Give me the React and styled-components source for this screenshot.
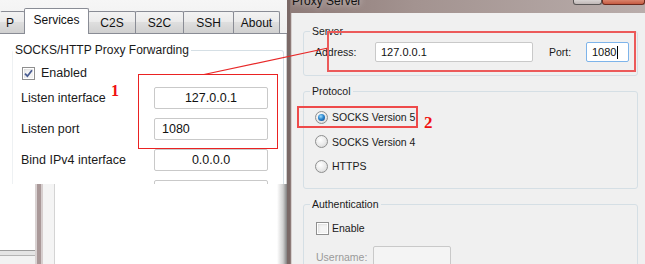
import React from "react";
import styled, { createGlobalStyle } from "styled-components";

const Global = createGlobalStyle`
  html, body { margin: 0; padding: 0; background: #fff; }
  body {
    width: 645px; height: 264px; overflow: hidden;
    font-family: "Liberation Sans", Arial, sans-serif;
    font-size: 12px; color: #1a1a1a;
  }
`;

const Stage = styled.div`
  position: relative;
  width: 645px;
  height: 264px;
  display: flex;
  overflow: hidden;
`;

/* ---------- left dialog ---------- */
const LeftPane = styled.div`
  width: 287px;
  flex: none;
  display: flex;
  flex-direction: column;
`;

const DialogTop = styled.div`
  height: 184px;
  flex: none;
  display: flex;
  flex-direction: column;
  overflow: hidden;
  background: #fff;
`;

const TabBar = styled.div`
  box-sizing: border-box;
  height: 34px;
  flex: none;
  display: flex;
  align-items: flex-end;
  background: linear-gradient(#f6f6f6, #efefef);
  border-bottom: 1px solid #898c95;
`;

const Tab = styled.div`
  box-sizing: border-box;
  width: ${(p) => p.$w}px;
  height: ${(p) => (p.$active ? 26 : 22)}px;
  margin-left: ${(p) => (p.$first ? 0 : -1)}px;
  margin-bottom: ${(p) => (p.$active ? -1 : 0)}px;
  border: 1px solid #898c95;
  border-bottom: none;
  border-left-color: ${(p) => (p.$first ? "transparent" : "#898c95")};
  border-radius: 2px 2px 0 0;
  background: ${(p) =>
    p.$active
      ? "#fff"
      : "linear-gradient(#f3f3f3 0%, #ebebeb 45%, #dedede 50%, #d0d0d0 100%)"};
  position: relative;
  z-index: ${(p) => (p.$active ? 2 : 1)};
  display: flex;
  align-items: center;
  justify-content: ${(p) => (p.$first ? "flex-end" : "center")};
  padding: ${(p) => (p.$first ? "0 10px 0 0" : p.$active ? "0 0 3px 0" : "0")};
  font-size: 12px;
  color: #111;
`;

const TabPage = styled.div`
  flex: 1;
  background: #fff;
  border-right: 1px solid #cfcfcf;
  padding: 9px 2px 0 12px;
`;

const GroupBox = styled.fieldset`
  margin: ${(p) => p.$mt || 0}px 0 0 0;
  padding: 0;
  min-width: 0;
  border: 1px solid #d5dfe5;
  border-left-color: ${(p) => (p.$faintLeft ? "#eef1f3" : "#d5dfe5")};
  border-radius: 3px;
`;

const Legend = styled.legend`
  margin-left: ${(p) => p.$ml || 0}px;
  padding: 0 2px;
  font-size: ${(p) => p.$fs || 12}px;
  line-height: ${(p) => p.$lh || 14}px;
  color: #1a1a1a;
`;

const LeftBody = styled.div`
  padding: 8px 0 0 8px;
`;

const CheckRow = styled.label`
  display: flex;
  align-items: center;
  gap: ${(p) => p.$gap || 6}px;
  height: 16px;
  margin-left: ${(p) => p.$ml || 0}px;
  font-size: ${(p) => p.$fs || 12.5}px;
`;

const CheckBox = styled.span`
  box-sizing: border-box;
  width: 13px;
  height: 13px;
  flex: none;
  border: 1px solid #8f8f8f;
  background: #f4f4f4;
  box-shadow: inset 0 0 0 1px #fff, inset 1px 1px 3px #c9c9c9;
  display: flex;
  align-items: center;
  justify-content: center;
`;

const FieldGrid = styled.div`
  display: grid;
  grid-template-columns: 133px 114px;
  row-gap: 9px;
  align-items: center;
  margin-top: 6px;
`;

const FieldLabel = styled.span`
  font-size: 12.5px;
  white-space: nowrap;
`;

const TextBox = styled.div`
  box-sizing: border-box;
  height: ${(p) => p.$h || 22}px;
  width: ${(p) => (p.$w ? `${p.$w}px` : "auto")};
  border: 1px solid ${(p) => (p.$focus ? "#7eb4ea" : "#c9c9c9")};
  border-radius: 2px;
  background: ${(p) => (p.$disabled ? "#f4f4f4" : "#fff")};
  display: flex;
  align-items: center;
  justify-content: ${(p) => (p.$center ? "center" : "flex-start")};
  padding: 0 ${(p) => (p.$pad == null ? 7 : p.$pad)}px;
  margin-left: ${(p) => p.$ml || 0}px;
  font-size: ${(p) => p.$fs || 12.5}px;
  color: #111;
  white-space: nowrap;
  flex: none;
`;

const Caret = styled.span`
  display: inline-block;
  width: 1px;
  height: 13px;
  background: #000;
  margin-left: 1px;
`;

const DialogBottom = styled.div`
  flex: 1;
  display: flex;
`;

const BackLeft = styled.div`
  width: 35px;
  flex: none;
  display: flex;
  flex-direction: column;
  background: #fff;
`;

const Ledge = styled.div`
  margin-top: auto;
  height: 4px;
  border-top: 1px solid #9c9c9c;
  border-bottom: 1px solid #b4b4b4;
  background: #e4e4e4;
`;

const Floor = styled.div`
  height: 8px;
  background: #f2f2f2;
`;

const FrameBand = styled.div`
  width: 20px;
  flex: none;
  background: linear-gradient(
    90deg,
    #d9d2d2 0 2px,
    #a99898 2px 6px,
    #d6cece 6px 8px,
    #f4f4f4 8px 19px,
    #d4d4d4 19px 20px
  );
`;

const BackRight = styled.div`
  flex: 1;
  background: linear-gradient(
    90deg,
    #fff 0,
    #fff calc(100% - 10px),
    #d0d0d0 calc(100% - 4px),
    #808080 100%
  );
`;

/* ---------- right window ---------- */
const Window = styled.div`
  width: 358px;
  flex: none;
  display: flex;
  flex-direction: column;
  box-sizing: border-box;
  border-left: 3px solid #7a6967;
  padding-left: 1px;
  background: linear-gradient(90deg, #8e7b78 0%, #a39390 35%, #b9adab 100%);
`;

const TitleBar = styled.div`
  height: 13px;
  flex: none;
  display: flex;
  align-items: flex-start;
  overflow: hidden;
`;

const Title = styled.span`
  flex: 1;
  margin: -6px 0 0 1px;
  font-size: 12px;
  line-height: 14px;
  color: #111;
  text-shadow: 0 0 6px rgba(255, 255, 255, 0.8);
`;

const CaptionButton = styled.span`
  box-sizing: border-box;
  width: ${(p) => p.$w}px;
  height: 5px;
  border: 1px solid ${(p) => (p.$close ? "#6b2a1e" : "#5a5656")};
  border-top: none;
  border-radius: 0 0 3px 3px;
  background: ${(p) =>
    p.$close ? "linear-gradient(#d9836b, #c55b42)" : "linear-gradient(#d8d3d2, #bfb7b6)"};
`;

const Client = styled.div`
  flex: 1;
  background: #f0f0f0;
  border-left: 1px solid #d6d0cf;
  padding: 12px 7px 0 11px;
  overflow: hidden;
  font-size: 10.5px;
`;

const RightBody = styled.div`
  padding: ${(p) => p.$pad};
  display: flex;
  flex-direction: column;
  gap: ${(p) => p.$gap || 0}px;
`;

const ServerRow = styled.div`
  display: flex;
  align-items: center;
  height: ${(p) => p.$h || 20}px;
`;

const RLabel = styled.span`
  width: ${(p) => p.$w}px;
  flex: none;
  margin-left: ${(p) => p.$ml || 0}px;
  font-size: 10.5px;
  color: ${(p) => (p.$disabled ? "#9a9a9a" : "#1a1a1a")};
  white-space: nowrap;
`;

const RadioRow = styled.label`
  display: flex;
  align-items: center;
  gap: 4px;
  height: 16px;
  font-size: 10.5px;
`;

const Radio = styled.span`
  box-sizing: border-box;
  width: 13px;
  height: 13px;
  flex: none;
  border-radius: 50%;
  border: 1px solid #8e8f8f;
  background: radial-gradient(circle at 40% 35%, #ffffff 0%, #e9e9e9 55%, #cfcfcf 100%);
  display: flex;
  align-items: center;
  justify-content: center;
`;

const RadioDot = styled.span`
  width: 7px;
  height: 7px;
  border-radius: 50%;
  background: radial-gradient(circle at 40% 35%, #9fdcfb 0%, #2b86cf 45%, #0d3f7d 100%);
`;

/* ---------- annotations ---------- */
const Overlay = styled.div`
  position: absolute;
  inset: 0;
  pointer-events: none;
  z-index: 10;
`;

const RedBox = styled.div`
  position: absolute;
  left: ${(p) => p.$x}px;
  top: ${(p) => p.$y}px;
  width: ${(p) => p.$w}px;
  height: ${(p) => p.$h}px;
  box-sizing: border-box;
  border: ${(p) => p.$bw || 1}px solid ${(p) => p.$c || "#e82020"};
`;

const Marker = styled.span`
  position: absolute;
  left: ${(p) => p.$x}px;
  top: ${(p) => p.$y}px;
  font-family: "Liberation Serif", "Times New Roman", serif;
  font-weight: bold;
  font-size: ${(p) => p.$fs}px;
  line-height: 1;
  color: #f01010;
`;

const LineLayer = styled.svg`
  position: absolute;
  left: 0;
  top: 0;
`;

function Check() {
  return (
    <svg width="9" height="9" viewBox="0 0 9 9">
      <path d="M1 4.6 L3.4 7.2 L8 1.2" fill="none" stroke="#4a5d92" strokeWidth="1.8" />
    </svg>
  );
}

export default function App() {
  return (
    <>
      <Global />
      <Stage>
        <LeftPane>
          <DialogTop>
            <TabBar>
              <Tab $first $w={25}>P</Tab>
              <Tab $active $w={65}>Services</Tab>
              <Tab $w={48}>C2S</Tab>
              <Tab $w={49}>S2C</Tab>
              <Tab $w={51}>SSH</Tab>
              <Tab $w={47}>About</Tab>
            </TabBar>
            <TabPage>
              <GroupBox $faintLeft>
                <Legend $ml={0} $lh={14}>SOCKS/HTTP Proxy Forwarding</Legend>
                <LeftBody>
                  <CheckRow $ml={1} $gap={6}>
                    <CheckBox><Check /></CheckBox>
                    Enabled
                  </CheckRow>
                  <FieldGrid>
                    <FieldLabel>Listen interface</FieldLabel>
                    <TextBox $center>127.0.0.1</TextBox>
                    <FieldLabel>Listen port</FieldLabel>
                    <TextBox>1080</TextBox>
                    <FieldLabel>Bind IPv4 interface</FieldLabel>
                    <TextBox $center>0.0.0.0</TextBox>
                    <FieldLabel />
                    <TextBox />
                  </FieldGrid>
                </LeftBody>
              </GroupBox>
            </TabPage>
          </DialogTop>
          <DialogBottom>
            <BackLeft>
              <Ledge />
              <Floor />
            </BackLeft>
            <FrameBand />
            <BackRight />
          </DialogBottom>
        </LeftPane>

        <Window>
          <TitleBar>
            <Title>Proxy Server</Title>
            <CaptionButton $w={29} />
            <CaptionButton $close $w={43} />
          </TitleBar>
          <Client>
            <GroupBox>
              <Legend $ml={6} $fs={10.5} $lh={13}>Server</Legend>
              <RightBody $pad="4px 0 13px 11px">
                <ServerRow>
                  <RLabel $w={60}>Address:</RLabel>
                  <TextBox $w={158} $h={20} $fs={11} $pad={5}>127.0.0.1</TextBox>
                  <RLabel $w={37} $ml={16}>Port:</RLabel>
                  <TextBox $w={43} $h={20} $fs={11} $pad={5} $focus>
                    1080<Caret />
                  </TextBox>
                </ServerRow>
              </RightBody>
            </GroupBox>

            <GroupBox $mt={9}>
              <Legend $ml={6} $fs={10.5} $lh={13}>Protocol</Legend>
              <RightBody $pad="11px 0 14px 11px" $gap={8.5}>
                <RadioRow>
                  <Radio><RadioDot /></Radio>
                  SOCKS Version 5
                </RadioRow>
                <RadioRow>
                  <Radio />
                  SOCKS Version 4
                </RadioRow>
                <RadioRow>
                  <Radio />
                  HTTPS
                </RadioRow>
              </RightBody>
            </GroupBox>

            <GroupBox $mt={9}>
              <Legend $ml={6} $fs={10.5} $lh={13}>Authentication</Legend>
              <RightBody $pad="9px 0 20px 12px" $gap={10}>
                <CheckRow $gap={3} $fs={10.5}>
                  <CheckBox />
                  Enable
                </CheckRow>
                <ServerRow $h={22}>
                  <RLabel $w={57} $disabled>Username:</RLabel>
                  <TextBox $w={78} $h={22} $disabled />
                </ServerRow>
              </RightBody>
            </GroupBox>
          </Client>
        </Window>

        <Overlay>
          <LineLayer width="645" height="264">
            <line x1="204" y1="74.5" x2="328" y2="48" stroke="#e82828" strokeWidth="1.2" />
          </LineLayer>
          <RedBox $x={138} $y={74} $w={140} $h={75} $c="#ea2222" />
          <RedBox $x={327} $y={31} $w={309} $h={41} $bw={2} $c="#ec5a5a" />
          <RedBox $x={297} $y={106} $w={121} $h={22} $bw={2} $c="#ee4a4a" />
          <Marker $x={111} $y={83} $fs={16}>1</Marker>
          <Marker $x={424} $y={114} $fs={17}>2</Marker>
        </Overlay>
      </Stage>
    </>
  );
}
